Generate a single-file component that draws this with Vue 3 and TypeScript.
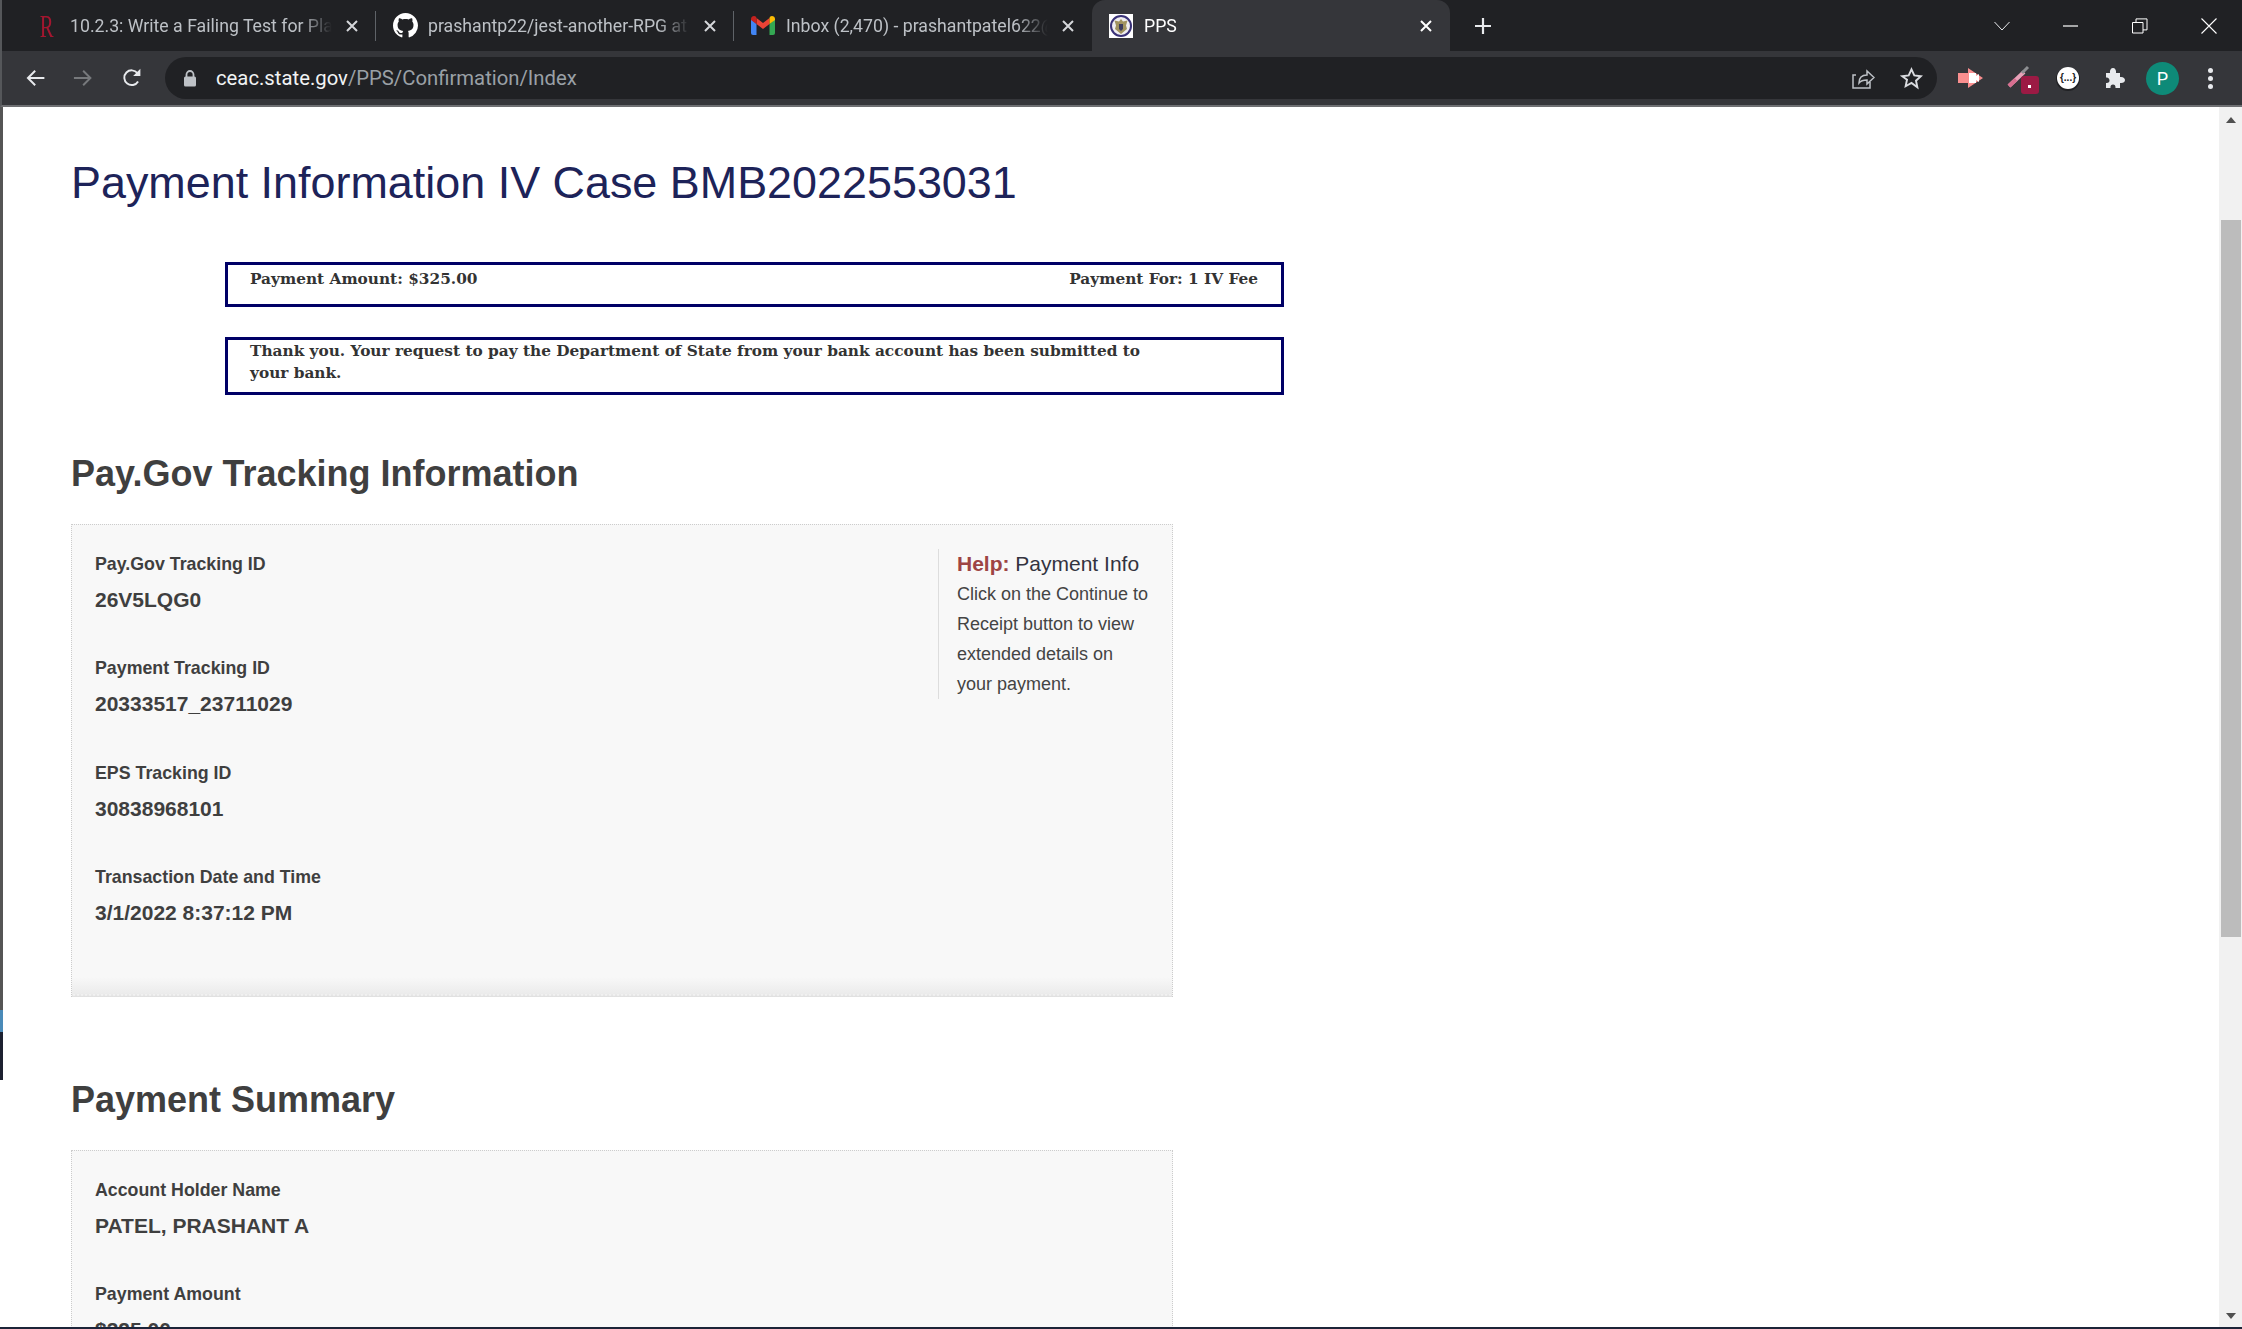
<script setup lang="ts">
interface Tab {
  title: string
  icon: 'rutgers' | 'github' | 'gmail' | 'seal'
  active?: boolean
}

interface Field {
  label: string
  value: string
}

const tabs: Tab[] = [
  { title: '10.2.3: Write a Failing Test for Playing a Card', icon: 'rutgers' },
  { title: 'prashantp22/jest-another-RPG at main', icon: 'github' },
  { title: 'Inbox (2,470) - prashantpatel622@gmail.com', icon: 'gmail' },
  { title: 'PPS', icon: 'seal', active: true },
]

const tracking: Field[] = [
  { label: 'Pay.Gov Tracking ID', value: '26V5LQG0' },
  { label: 'Payment Tracking ID', value: '20333517_23711029' },
  { label: 'EPS Tracking ID', value: '30838968101' },
  { label: 'Transaction Date and Time', value: '3/1/2022 8:37:12 PM' },
]

const summary: Field[] = [
  { label: 'Account Holder Name', value: 'PATEL, PRASHANT A' },
  { label: 'Payment Amount', value: '$325.00' },
]
</script>

<template>
  <div class="window">
    <header class="tabstrip">
      <div
        v-for="tab in tabs"
        :key="tab.title"
        class="tab"
        :class="{ active: tab.active }"
      >
        <span class="favicon">
          <span v-if="tab.icon === 'rutgers'" class="rutgers">R</span>
          <svg v-else-if="tab.icon === 'github'" width="25" height="25" viewBox="0 0 16 16">
            <path fill="#fff" d="M8 0C3.58 0 0 3.58 0 8c0 3.54 2.29 6.53 5.47 7.59.4.07.55-.17.55-.38 0-.19-.01-.82-.01-1.49-2.01.37-2.53-.49-2.69-.94-.09-.23-.48-.94-.82-1.13-.28-.15-.68-.52-.01-.53.63-.01 1.08.58 1.23.82.72 1.21 1.87.87 2.33.66.07-.52.28-.87.51-1.07-1.78-.2-3.64-.89-3.64-3.95 0-.87.31-1.59.82-2.15-.08-.2-.36-1.02.08-2.12 0 0 .67-.21 2.2.82.64-.18 1.32-.27 2-.27s1.36.09 2 .27c1.53-1.04 2.2-.82 2.2-.82.44 1.1.16 1.92.08 2.12.51.56.82 1.27.82 2.15 0 3.07-1.87 3.75-3.65 3.95.29.25.54.73.54 1.48 0 1.07-.01 1.93-.01 2.2 0 .21.15.46.55.38A8.01 8.01 0 0 0 16 8c0-4.42-3.58-8-8-8z" />
          </svg>
          <svg v-else-if="tab.icon === 'gmail'" width="24" height="19" viewBox="0 0 24 19">
            <path fill="#4285f4" d="M0 3v14a2 2 0 0 0 2 2h3.500V8z" />
            <path fill="#34a853" d="M24 3v14a2 2 0 0 1-2 2h-3.500V8z" />
            <path fill="#ea4335" d="M5.500 8V2L12 7l6.500-5v6L12 13z" />
            <path fill="#c5221f" d="M0 3c0-2.500 3-3.800 5-2.300L5.500 2v6L0 4z" />
            <path fill="#fbbc04" d="M24 3c0-2.500-3-3.800-5-2.300L18.500 2v6L24 4z" />
          </svg>
          <svg v-else width="24" height="24" viewBox="0 0 24 24">
            <rect width="24" height="24" fill="#fff" />
            <circle cx="12" cy="12" r="10" fill="#efedf0" stroke="#3a3278" stroke-width="2" />
            <path fill="#a0925f" d="M12 5l2 2.500 4.500-1-1.500 5 1 3.500-6 5-6-5 1-3.500-1.500-5 4.500 1z" />
            <path fill="#3b3a5c" d="M10 10h4v5l-2 2-2-2z" />
          </svg>
        </span>
        <span class="tab-title">{{ tab.title }}</span>
        <svg class="tab-close" width="12" height="12" viewBox="0 0 12 12">
          <path d="M1 1l10 10M11 1L1 11" stroke="currentColor" stroke-width="2" fill="none" />
        </svg>
      </div>
      <svg class="new-tab" width="18" height="18" viewBox="0 0 18 18">
        <path d="M9 1v16M1 9h16" stroke="#e8eaed" stroke-width="2.200" fill="none" />
      </svg>
      <div class="caption">
        <svg width="16" height="10" viewBox="0 0 16 10">
          <path d="M.5 1L8 9l7.500-8" stroke="#e8eaed" fill="none" />
        </svg>
        <svg width="16" height="16" viewBox="0 0 16 16">
          <path d="M0 8h15" stroke="#fff" stroke-width="1.200" fill="none" />
        </svg>
        <svg width="16" height="16" viewBox="0 0 16 16">
          <path d="M.5 4.500h10.500v10.500H.5zM4 4.500V.9h11v11h-4" stroke="#fff" fill="none" />
        </svg>
        <svg width="16" height="16" viewBox="0 0 16 16">
          <path d="M.5.500l15 15M15.500.500l-15 15" stroke="#fff" stroke-width="1.100" fill="none" />
        </svg>
      </div>
    </header>

    <nav class="toolbar">
      <div class="nav-buttons">
        <svg width="22" height="22" viewBox="0 0 22 22">
          <path d="M20 11H3M10.500 3.500L3 11l7.500 7.500" stroke="#e8eaed" stroke-width="2" fill="none" />
        </svg>
        <svg width="22" height="22" viewBox="0 0 22 22">
          <path d="M2 11h17M11.500 3.500L19 11l-7.500 7.500" stroke="#77797c" stroke-width="2" fill="none" />
        </svg>
        <svg class="reload" width="22" height="22" viewBox="0 0 22 22">
          <path d="M17.600 14.500A7.600 7.600 0 1 1 17 6" stroke="#e8eaed" stroke-width="2" fill="none" />
          <path d="M20 1.500V9h-7.500z" fill="#e8eaed" />
        </svg>
      </div>
      <div class="omnibox">
        <svg class="lock" width="14" height="17" viewBox="0 0 14 17">
          <path d="M3.500 7V4.500a3.500 3.500 0 0 1 7 0V7" stroke="#bdc1c6" stroke-width="1.800" fill="none" />
          <rect x="1" y="6.500" width="12" height="10" rx="1.500" fill="#bdc1c6" />
        </svg>
        <span class="url"><b>ceac.state.gov</b>/PPS/Confirmation/Index</span>
        <svg class="share" width="24" height="24" viewBox="0 0 24 24">
          <path d="M19 15v7H2V9h3M8 17c0-5 3-8 8-8V5l7 6.500-7 6.500v-4c-3 0-6 .500-8 3z" stroke="#bdc1c6" stroke-width="1.500" fill="none" />
        </svg>
        <svg class="star" width="23" height="23" viewBox="0 0 24 24">
          <path d="M12 2.500l2.900 6.300 6.900.800-5.100 4.700 1.400 6.800L12 16.700l-6.100 3.400 1.400-6.800L2.200 9.600l6.900-.800z" stroke="#dadce0" stroke-width="2" fill="none" />
        </svg>
      </div>
      <div class="extensions">
        <svg width="26" height="22" viewBox="0 0 26 22">
          <path fill="#fa8f8f" d="M0 6h10V1l15 10-15 10v-5H0z" />
          <path fill="#fff" d="M11 6h7v10h-7zM18 9l3-2v8l-3-2z" />
        </svg>
        <span class="dropper">
          <svg width="24" height="24" viewBox="0 0 24 24">
            <path d="M2 22L17 8" stroke="#e8a2b8" stroke-width="4" />
            <path d="M2 22L9 15.500" stroke="#d86f90" stroke-width="4" />
            <path d="M15 9l6-6" stroke="#8d8f92" stroke-width="3" />
          </svg>
          <i class="badge"></i>
        </span>
        <span class="json">{...}</span>
        <svg class="puzzle" width="22" height="22" viewBox="0 0 22 22">
          <path fill="#e8eaed" d="M2 6h4c-.500-3 1-5 3-5s3.500 2 3 5h4v4c3-.500 5 1 5 3s-2 3.500-5 3v5h-4.500c.300-2.500-1-3.500-2.500-3.500s-2.800 1-2.500 3.500H2v-5c2.500.300 3.500-1 3.500-2.500S4.500 10.200 2 10.500z" />
        </svg>
        <span class="avatar">P</span>
        <span class="kebab"><i></i><i></i><i></i></span>
      </div>
    </nav>

    <div class="viewport">
      <div class="desk-edge">
        <i class="edge-grey"></i>
        <i class="edge-blue"></i>
        <i class="edge-dark"></i>
      </div>
      <main class="page">
        <h1>Payment Information IV Case BMB2022553031</h1>

        <div class="notice amount">
          <span>Payment Amount: $325.00</span>
          <span>Payment For: 1 IV Fee</span>
        </div>
        <div class="notice message">
          Thank you. Your request to pay the Department of State from your bank account has been submitted to your bank.
        </div>

        <h2 class="tracking-head">Pay.Gov Tracking Information</h2>
        <section class="panel tracking">
          <div class="fields">
            <div v-for="f in tracking" :key="f.label" class="field">
              <label>{{ f.label }}</label>
              <p>{{ f.value }}</p>
            </div>
          </div>
          <aside class="help">
            <h3><em>Help:</em> Payment Info</h3>
            <p>Click on the Continue to Receipt button to view extended details on your payment.</p>
          </aside>
        </section>

        <h2 class="summary-head">Payment Summary</h2>
        <section class="panel">
          <div class="fields">
            <div v-for="f in summary" :key="f.label" class="field">
              <label>{{ f.label }}</label>
              <p>{{ f.value }}</p>
            </div>
          </div>
        </section>
      </main>
      <div class="scrollbar">
        <i class="arrow up"></i>
        <div class="thumb"></div>
        <i class="arrow down"></i>
      </div>
    </div>
    <div class="taskbar-edge"></div>
  </div>
</template>

<style>
html,
body {
  margin: 0;
  overflow: hidden;
  background: #fff;
}
</style>

<style scoped>
.window {
  width: 2242px;
  height: 1329px;
  display: flex;
  flex-direction: column;
  overflow: hidden;
  font-family: "Liberation Sans", Arial, sans-serif;
}

.tabstrip {
  height: 51px;
  flex: none;
  display: flex;
  align-items: stretch;
  padding-left: 16px;
  background: #202124;
  border-left: 2px solid #55575a;
  box-sizing: border-box;
  color: #bdc1c6;
  font-family: Roboto, sans-serif;
  font-size: 17.700px;
}

.tab {
  width: 358px;
  flex: none;
  display: flex;
  align-items: center;
  box-sizing: border-box;
  padding: 0 18px 0 16px;
  position: relative;
}

.tab:not(.active):not(:nth-child(3))::after {
  content: "";
  position: absolute;
  right: 0;
  top: 11px;
  height: 30px;
  width: 1px;
  background: #5f6368;
}

.tab.active {
  background: #35363a;
  border-radius: 13px 13px 0 0;
  color: #fff;
}

.favicon {
  width: 26px;
  height: 26px;
  flex: none;
  display: flex;
  align-items: center;
  justify-content: center;
  margin-right: 10px;
}

.rutgers {
  font-family: "Liberation Serif", serif;
  font-size: 32px;
  line-height: 26px;
  color: #a3162f;
  transform: scaleX(0.65);
}

.tab-title {
  flex: 1;
  min-width: 0;
  white-space: nowrap;
  overflow: hidden;
  -webkit-mask-image: linear-gradient(to right, #000 88%, transparent 100%);
  mask-image: linear-gradient(to right, #000 88%, transparent 100%);
}

.tab-close {
  flex: none;
  margin-left: 14px;
  color: #d5d7da;
}

.active .tab-close {
  color: #fff;
}

.new-tab {
  align-self: center;
  margin-left: 24px;
}

.caption {
  margin-left: auto;
  display: flex;
  align-items: center;
  gap: 53px;
  padding-right: 25px;
}

.toolbar {
  height: 56px;
  flex: none;
  display: flex;
  align-items: center;
  background: #35363a;
  border-left: 2px solid #55575a;
  border-bottom: 2px solid #6e6f72;
  box-sizing: border-box;
}

.nav-buttons {
  display: flex;
  align-items: center;
  gap: 26px;
  padding-left: 23px;
  width: 140px;
  box-sizing: border-box;
}

.reload {
  margin-left: 1px;
}

.omnibox {
  width: 1772px;
  height: 42px;
  margin-left: 23px;
  flex: none;
  display: flex;
  align-items: center;
  border-radius: 21px;
  background: #202124;
  box-sizing: border-box;
  padding: 0 14px 0 18px;
  font-family: Roboto, sans-serif;
  font-size: 20.300px;
  color: #9aa0a6;
}

.lock {
  flex: none;
  margin-right: 19px;
}

.url {
  flex: 1;
}

.url b {
  font-weight: 400;
  color: #f1f3f4;
}

.share {
  margin-right: 25px;
}

.extensions {
  flex: 1;
  display: flex;
  align-items: center;
  padding-left: 21px;
  gap: 20px;
}

.dropper {
  position: relative;
  width: 28px;
  height: 28px;
  margin-left: 3px;
  display: block;
}

.badge {
  position: absolute;
  left: 14px;
  top: 12px;
  width: 18px;
  height: 18px;
  border-radius: 3px;
  background: #9c1a44;
}

.badge::after {
  content: "";
  position: absolute;
  left: 7px;
  top: 9px;
  width: 3px;
  height: 3px;
  background: #fff;
}

.json {
  width: 22px;
  height: 22px;
  border-radius: 50%;
  background: #fff;
  box-shadow: 0 1px 0 1px #202124;
  color: #202124;
  font-family: "Liberation Sans", sans-serif;
  font-size: 10px;
  font-weight: 700;
  line-height: 22px;
  text-align: center;
  margin-left: 2px;
}

.puzzle {
  margin-left: 5px;
}

.avatar {
  width: 33px;
  height: 33px;
  border-radius: 50%;
  background: #0e8a78;
  color: #fff;
  font-family: Roboto, sans-serif;
  font-size: 18px;
  line-height: 33px;
  text-align: center;
}

.kebab {
  display: flex;
  flex-direction: column;
  gap: 3px;
  margin-left: 9px;
}

.kebab i {
  width: 5px;
  height: 5px;
  border-radius: 50%;
  background: #e8eaed;
}

.viewport {
  flex: 1;
  min-height: 0;
  display: flex;
  position: relative;
}

.desk-edge {
  width: 3px;
  flex: none;
  display: flex;
  flex-direction: column;
}

.edge-grey {
  height: 903px;
  background: #555;
}

.edge-blue {
  height: 22px;
  background: #4a8ab8;
}

.edge-dark {
  height: 48px;
  background: #1c2030;
}

.page {
  flex: 1;
  min-width: 0;
  overflow: hidden;
  padding-left: 68px;
  color: #3f3f3f;
}

h1 {
  margin: 50px 0 0;
  font-size: 44.900px;
  line-height: 52px;
  font-weight: 400;
  color: #1d2359;
}

.notice {
  width: 1059px;
  box-sizing: border-box;
  margin-left: 154px;
  border: 3px solid #000066;
  font-family: "DejaVu Serif", serif;
  font-weight: 700;
  font-size: 15.330px;
  line-height: 22px;
  color: #333;
}

.amount {
  height: 45px;
  margin-top: 53px;
  padding: 3px 23px 0 22px;
  display: flex;
  justify-content: space-between;
}

.message {
  height: 58px;
  margin-top: 30px;
  padding: 0 130px 0 22px;
}

h2 {
  margin: 0;
  font-size: 36px;
  line-height: 44px;
  font-weight: 700;
  color: #3f3f3f;
}

.tracking-head {
  margin-top: 57px;
}

.summary-head {
  margin-top: 81px;
}

.panel {
  width: 1102px;
  box-sizing: border-box;
  margin-top: 28px;
  padding: 26px 23px 0;
  display: flex;
  justify-content: space-between;
  background: #f8f8f8;
  border: 1px dotted #ccc;
  border-bottom: 0;
}

.tracking {
  height: 473px;
  background-image:
    radial-gradient(circle at 2px 2px, rgb(255 255 255 / 35%) 1px, transparent 1.500px),
    linear-gradient(to bottom, #f8f8f8 0, #f8f8f8 452px, #ebebeb 469px, #dadada 473px);
  background-size: 4px 4px, 100% 100%;
  background-repeat: repeat-x, no-repeat;
  background-position-y: bottom, 0;
}

.field {
  height: 104.300px;
}

.field label {
  display: block;
  font-size: 17.800px;
  line-height: 26px;
  font-weight: 700;
}

.field p {
  margin: 10px 0 0;
  font-size: 21px;
  line-height: 26px;
  font-weight: 700;
}

.help {
  width: 213px;
  height: 150px;
  box-sizing: border-box;
  margin-top: -2px;
  padding-left: 18px;
  border-left: 1px solid #ddd;
  margin-right: -2px;
}

.help h3 {
  margin: 0;
  font-size: 21px;
  line-height: 30px;
  font-weight: 400;
  color: #33333f;
  white-space: nowrap;
}

.help em {
  font-style: normal;
  font-weight: 700;
  color: #9e4444;
}

.help p {
  margin: 0;
  font-size: 18px;
  line-height: 30px;
  color: #444;
}

.scrollbar {
  width: 23px;
  flex: none;
  background: #f1f1f1;
  position: relative;
}

.thumb {
  position: absolute;
  left: 2px;
  right: 1px;
  top: 113px;
  height: 717px;
  background: #bcbcbc;
}

.arrow {
  position: absolute;
  left: 7px;
  width: 0;
  height: 0;
  border-left: 5px solid transparent;
  border-right: 5px solid transparent;
}

.arrow.up {
  top: 10px;
  border-bottom: 6px solid #505050;
}

.arrow.down {
  bottom: 8px;
  border-top: 6px solid #505050;
}

.taskbar-edge {
  height: 2px;
  flex: none;
  background: #1c2438;
}
</style>
